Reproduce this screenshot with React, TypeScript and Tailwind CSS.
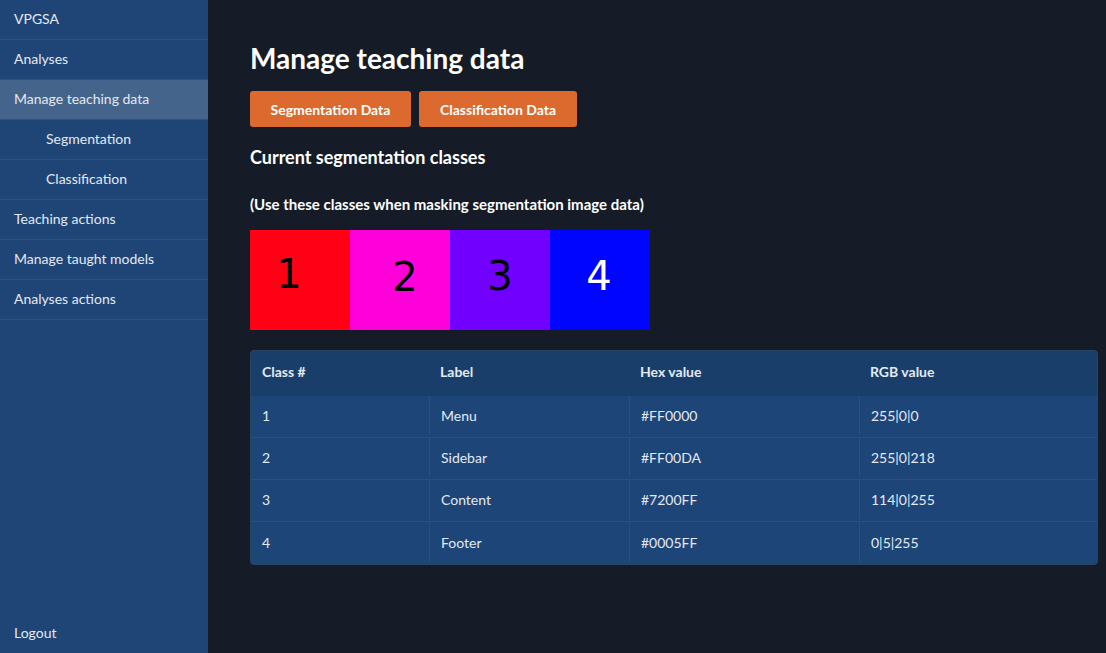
const nav = [
  { label: "VPGSA" },
  { label: "Analyses" },
  { label: "Manage teaching data", active: true },
  { label: "Segmentation", sub: true },
  { label: "Classification", sub: true },
  { label: "Teaching actions" },
  { label: "Manage taught models" },
  { label: "Analyses actions" },
];

const classes = [
  { id: "1", label: "Menu", hex: "#FF0000", rgb: "255|0|0" },
  { id: "2", label: "Sidebar", hex: "#FF00DA", rgb: "255|0|218" },
  { id: "3", label: "Content", hex: "#7200FF", rgb: "114|0|255" },
  { id: "4", label: "Footer", hex: "#0005FF", rgb: "0|5|255" },
];

function Sidebar() {
  return (
    <aside className="flex w-[208px] shrink-0 flex-col bg-[#1f4577] text-[14px] text-[#e3e9f2]">
      {nav.map((item) => (
        <div
          key={item.label}
          className={`flex h-[40px] items-center border-b border-[#2c5285] pb-[3px] ${item.sub ? "pl-[46px]" : "pl-[14px]"} ${item.active ? "bg-[#45648c]" : ""}`}
        >
          {item.label}
        </div>
      ))}
      <div className="mt-auto flex h-[40px] items-center pb-[2px] pl-[14px]">Logout</div>
    </aside>
  );
}

function Swatches() {
  return (
    <div className="mt-[16px] flex font-['DejaVu_Sans',sans-serif] text-[40px] leading-none">
      <div className="flex h-[100px] w-[100px] items-center justify-center bg-[#ff0014] pb-[12px] pr-[22px] text-black">1</div>
      <div className="flex h-[100px] w-[100px] items-center justify-center bg-[#ff00da] pb-[6px] pl-[10px] text-black">2</div>
      <div className="flex h-[100px] w-[100px] items-center justify-center bg-[#7200ff] pb-[8px] text-black">3</div>
      <div className="flex h-[100px] w-[100px] items-center justify-center bg-[#0005ff] pb-[8px] pr-[2px] text-white">4</div>
    </div>
  );
}

function ClassTable() {
  const cols = "grid grid-cols-[178px_200px_230px_1fr]";
  return (
    <div className="mt-[20px] w-[848px] overflow-hidden rounded-[4px] border border-[#2a4468] bg-[#1e4578] text-[14px] text-[#e3e9f2]">
      <div className={`${cols} h-[45px] items-center bg-[#193e6a] pb-[4px] text-[14px] font-bold`}>
        <div className="pl-[11px]">Class #</div>
        <div className="pl-[11px]">Label</div>
        <div className="pl-[11px]">Hex value</div>
        <div className="pl-[11px]">RGB value</div>
      </div>
      {classes.map((c, i) => (
        <div key={c.id} className={`${cols} h-[42px] pb-[2px] ${i < classes.length - 1 ? "border-b border-[#2b4f80]" : ""}`}>
          <div className="flex items-center pl-[11px]">{c.id}</div>
          <div className="flex items-center border-l border-[#2b4f80] pl-[11px]">{c.label}</div>
          <div className="flex items-center border-l border-[#2b4f80] pl-[11px]">{c.hex}</div>
          <div className="flex items-center border-l border-[#2b4f80] pl-[11px]">{c.rgb}</div>
        </div>
      ))}
    </div>
  );
}

export default function App() {
  return (
    <div className="flex h-[653px] w-[1106px] overflow-hidden bg-[#151c28] font-['Lato',sans-serif]">
      <Sidebar />
      <main className="flex-1 pl-[42px] pt-[41px] text-white">
        <h1 className="text-[28px] font-bold leading-[34px]">Manage teaching data</h1>
        <div className="mt-[16px] flex gap-[8px]">
          <button type="button" className="h-[36px] w-[161px] rounded-[3px] bg-[#dc6a2e] text-[14px] font-bold text-white">Segmentation Data</button>
          <button type="button" className="h-[36px] w-[158px] rounded-[3px] bg-[#dc6a2e] text-[14px] font-bold text-white">Classification Data</button>
        </div>
        <h2 className="mt-[18px] text-[18px] font-bold leading-[24px]">Current segmentation classes</h2>
        <p className="mt-[25px] text-[15px] font-bold leading-[20px]">(Use these classes when masking segmentation image data)</p>
        <Swatches />
        <ClassTable />
      </main>
    </div>
  );
}
